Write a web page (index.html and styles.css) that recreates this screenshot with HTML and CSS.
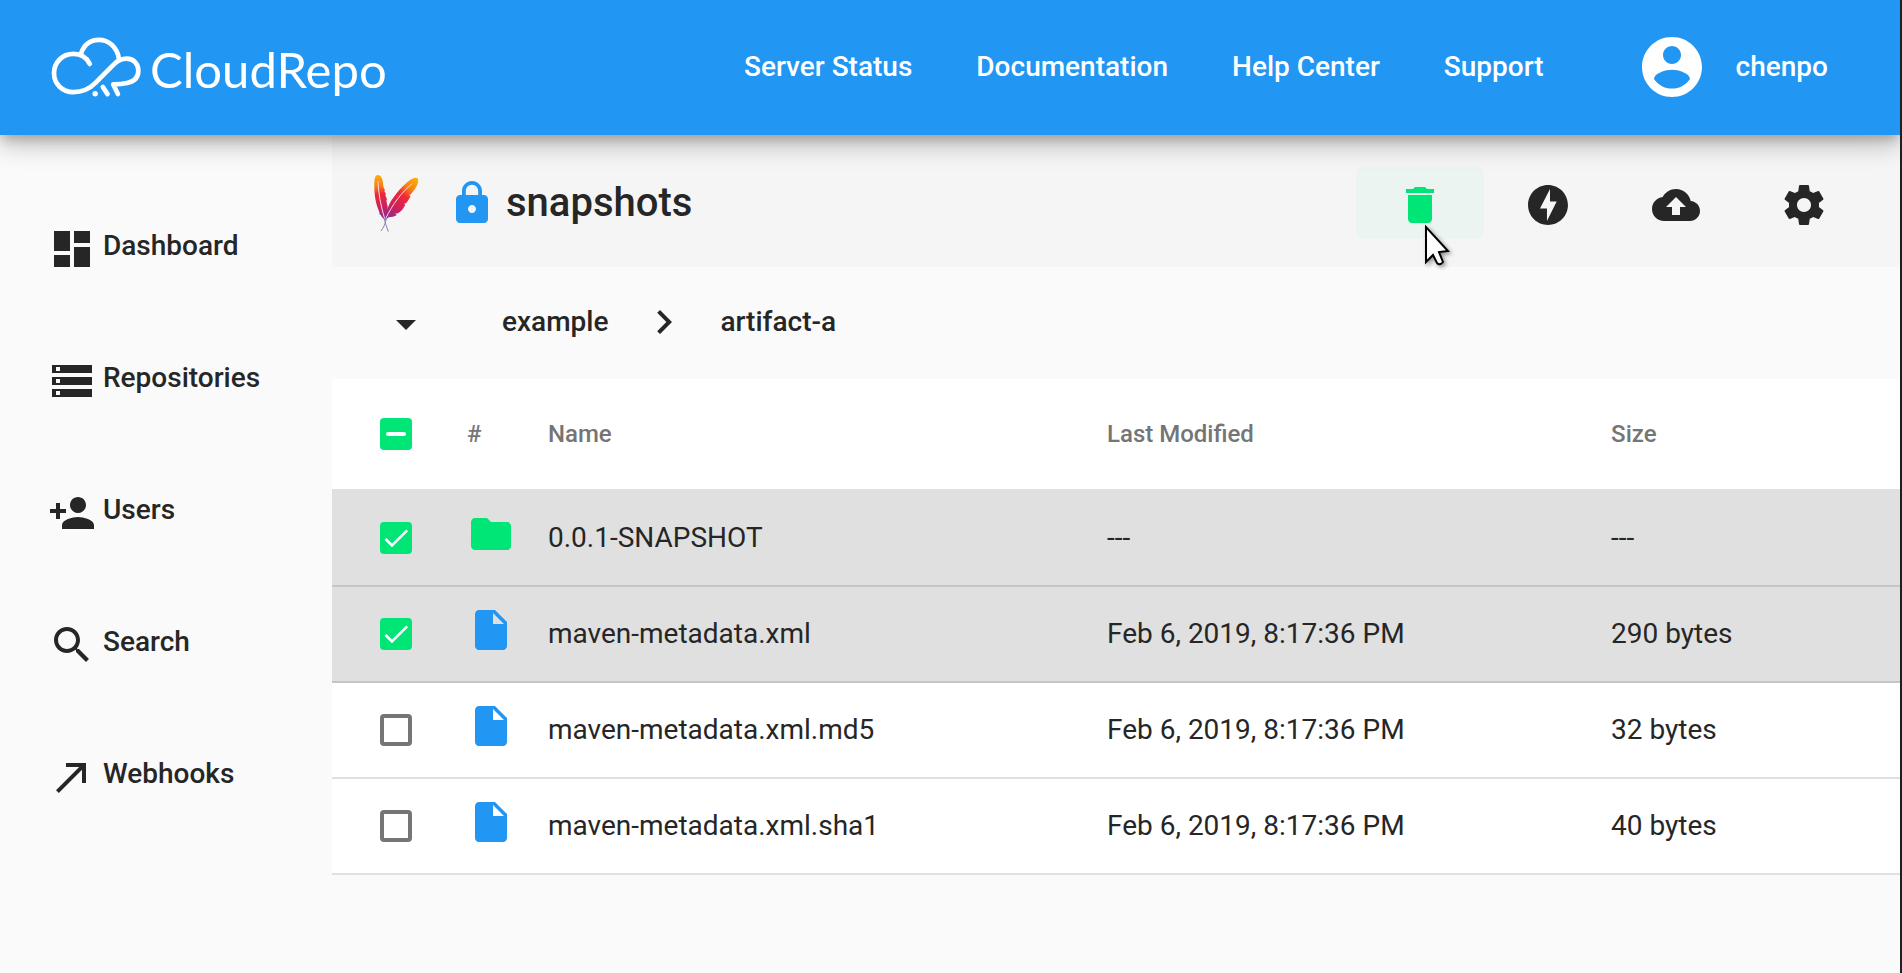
FILE: index.html
```html
<!DOCTYPE html>
<html lang="en">
<head>
<meta charset="utf-8">
<meta name="viewport" content="width=device-width, initial-scale=1">
<title>CloudRepo</title>
<link rel="stylesheet" href="styles.css">
</head>
<body>
<header class="topbar">
  <a class="brand" href="#">
    <svg class="brand-mark" viewBox="64 48 272 184" fill="none" stroke="currentColor" stroke-width="14" stroke-linecap="round" stroke-linejoin="round" aria-hidden="true">
      <path d="M180 131C171 112 153 101 131 101C98 101 73 126 73 159C73 191 98 215 131 215C157 215 177 207 196 188L252 132C264 120 275 115 290 115C311 115 325 130 325 151C325 172 311 184 291 188C279 191 265 192 250 192L264 221"/>
      <path d="M153 101C162 75 181 59 207 59C237 59 262 81 267 115"/>
      <path d="M219 200L233 221"/>
      <circle cx="196" cy="220" r="8" fill="currentColor" stroke="none"/>
    </svg>
    <span class="brand-name">CloudRepo</span>
  </a>
  <nav class="topnav">
    <a href="#">Server Status</a>
    <a href="#">Documentation</a>
    <a href="#">Help Center</a>
    <a href="#">Support</a>
  </nav>
  <button class="account" type="button">
    <svg class="avatar" viewBox="0 0 24 24" aria-hidden="true"><path d="M12 2C6.48 2 2 6.48 2 12s4.48 10 10 10 10-4.480 10-10S17.520 2 12 2zm0 3c1.660 0 3 1.340 3 3s-1.340 3-3 3-3-1.340-3-3 1.340-3 3-3zm0 14.200c-2.500 0-4.710-1.280-6-3.220.030-1.990 4-3.080 6-3.080 1.990 0 5.970 1.090 6 3.080-1.290 1.940-3.500 3.220-6 3.220z"/></svg>
    <span>chenpo</span>
  </button>
</header>

<div class="layout">
  <nav class="sidebar">
    <a href="#"><svg class="icon" viewBox="0 0 24 24" aria-hidden="true"><path d="M3 13h8V3H3v10zm0 8h8v-6H3v6zm10 0h8V11h-8v10zm0-18v6h8V3h-8z"/></svg><span>Dashboard</span></a>
    <a href="#"><svg class="icon" viewBox="0 0 24 24" aria-hidden="true"><path d="M2 20h20v-4H2v4zm2-3h2v2H4v-2zM2 4v4h20V4H2zm4 3H4V5h2v2zm-4 7h20v-4H2v4zm2-3h2v2H4v-2z"/></svg><span>Repositories</span></a>
    <a href="#"><svg class="icon" viewBox="0 0 24 24" aria-hidden="true"><path d="M15 12c2.210 0 4-1.790 4-4s-1.790-4-4-4-4 1.790-4 4 1.790 4 4 4zm-9-2V7H4v3H1v2h3v3h2v-3h3v-2H6zm9 4c-2.670 0-8 1.340-8 4v2h16v-2c0-2.660-5.330-4-8-4z"/></svg><span>Users</span></a>
    <a href="#"><svg class="icon" viewBox="0 0 24 24" aria-hidden="true"><path d="M15.500 14h-.790l-.280-.270C15.410 12.590 16 11.110 16 9.500 16 5.910 13.090 3 9.500 3S3 5.910 3 9.500 5.910 16 9.500 16c1.610 0 3.090-.590 4.230-1.570l.270.280v.790l5 4.990L20.490 19l-4.990-5zm-6 0C7.010 14 5 11.990 5 9.500S7.010 5 9.500 5 14 7.010 14 9.500 11.990 14 9.500 14z"/></svg><span>Search</span></a>
    <a href="#"><svg class="icon" viewBox="0 0 24 24" aria-hidden="true"><path d="M9 5v2h6.590L4 18.590 5.410 20 17 8.410V15h2V5z"/></svg><span>Webhooks</span></a>
  </nav>

  <main class="content">
    <div class="repo-bar">
      <svg class="maven" viewBox="24 24 138 177" aria-hidden="true">
        <defs>
          <linearGradient id="leftFeather" gradientUnits="userSpaceOnUse" x1="38" y1="27" x2="60" y2="160">
            <stop offset="0" stop-color="#fbb00f"/><stop offset=".25" stop-color="#f97d12"/><stop offset=".42" stop-color="#ee2a38"/><stop offset=".7" stop-color="#d01f5a"/><stop offset="1" stop-color="#7e2f9a"/>
          </linearGradient>
          <linearGradient id="rightFeather" gradientUnits="userSpaceOnUse" x1="156" y1="38" x2="64" y2="160">
            <stop offset="0" stop-color="#fbb00f"/><stop offset=".25" stop-color="#f97d12"/><stop offset=".42" stop-color="#ee2a38"/><stop offset=".7" stop-color="#d01f5a"/><stop offset="1" stop-color="#7e2f9a"/>
          </linearGradient>
        </defs>
        <path fill="url(#leftFeather)" d="M36 27C44 25 51 32 53 44C55 55 54 66 60 72L58 76L63 84L61 88L66 100L64 104L68 122C69 136 66 148 61 162C54 156 49 152 47 146L44 146L43 138C34 118 28 92 28 64C28 44 28 31 36 27Z"/>
        <path fill="url(#rightFeather)" d="M158 37C162 44 158 56 152 65C147 73 142 79 138 84L132 88L137 89C134 97 129 104 124 111L117 114L121 117C115 128 108 137 99 142L90 143L96 147C88 153 79 152 71 154L61 162C59 150 63 139 68 127C73 113 79 103 86 94C96 78 110 64 124 51C137 39 150 31 158 37Z"/>
        <path fill="none" stroke="#fbd9dc" stroke-width="3" d="M39 45C40 80 47 120 59 158M142 53C112 76 82 115 62 158"/>
        <path fill="none" stroke="#8f7fb5" stroke-width="3" d="M57 156C60 170 65 183 70 197M64 156C62 172 56 184 48 195"/>
      </svg>
      <svg class="icon lock" viewBox="0 0 24 24" aria-hidden="true"><path d="M18 8h-1V6c0-2.760-2.240-5-5-5S7 3.240 7 6v2H6c-1.100 0-2 .900-2 2v10c0 1.100.900 2 2 2h12c1.100 0 2-.900 2-2V10c0-1.100-.900-2-2-2zm-6 9c-1.100 0-2-.900-2-2s.900-2 2-2 2 .900 2 2-.900 2-2 2zm3.100-9H8.900V6c0-1.710 1.390-3.100 3.100-3.100 1.710 0 3.100 1.390 3.100 3.100v2z"/></svg>
      <h1>snapshots</h1>
      <div class="actions">
        <button class="action active" type="button" aria-label="Delete">
          <svg class="icon" viewBox="0 0 24 24" aria-hidden="true"><path d="M6 19c0 1.100.900 2 2 2h8c1.100 0 2-.900 2-2V7H6v12zM19 4h-3.500l-1-1h-5l-1 1H5v2h14V4z"/></svg>
          <svg class="pointer" viewBox="0 0 26 42" aria-hidden="true"><path d="M2 3V38L9 31L13 39Q16 42 19 38L15 28L24 27Z" fill="#fff" stroke="#000" stroke-width="2"/></svg>
        </button>
        <button class="action" type="button" aria-label="Quick actions">
          <svg class="icon" viewBox="0 0 24 24" aria-hidden="true"><path d="M12 2.020c-5.510 0-9.980 4.470-9.980 9.980s4.470 9.980 9.980 9.980 9.980-4.470 9.980-9.980S17.510 2.020 12 2.020zM11.480 20v-6.260H8L13 4v6.260h3.350L11.480 20z"/></svg>
        </button>
        <button class="action" type="button" aria-label="Upload">
          <svg class="icon" viewBox="0 0 24 24" aria-hidden="true"><path d="M19.350 10.040C18.670 6.590 15.640 4 12 4 9.110 4 6.600 5.640 5.350 8.040 2.340 8.360 0 10.910 0 14c0 3.310 2.690 6 6 6h13c2.760 0 5-2.240 5-5 0-2.640-2.050-4.780-4.650-4.960zM14 13v4h-4v-4H7l5-5 5 5h-3z"/></svg>
        </button>
        <button class="action" type="button" aria-label="Settings">
          <svg class="icon" viewBox="0 0 24 24" aria-hidden="true"><path d="M19.430 12.980c.040-.320.070-.640.070-.980s-.030-.660-.070-.980l2.110-1.650c.190-.150.240-.420.120-.640l-2-3.460c-.120-.220-.390-.300-.610-.220l-2.490 1c-.520-.400-1.080-.730-1.690-.980l-.380-2.650C14.460 2.180 14.250 2 14 2h-4c-.250 0-.460.180-.490.420l-.380 2.650c-.610.250-1.170.590-1.690.980l-2.490-1c-.230-.090-.490 0-.610.220l-2 3.460c-.130.220-.070.490.120.640l2.110 1.650c-.040.320-.070.650-.070.980s.030.660.070.980l-2.110 1.650c-.190.150-.240.420-.120.640l2 3.460c.120.220.390.300.610.220l2.490-1c.520.400 1.080.730 1.690.980l.380 2.650c.030.240.240.420.490.420h4c.250 0 .460-.180.490-.420l.380-2.650c.610-.250 1.170-.590 1.690-.980l2.490 1c.230.090.490 0 .610-.220l2-3.460c.120-.220.070-.490-.120-.640l-2.110-1.650zM12 15.500c-1.930 0-3.500-1.570-3.500-3.500s1.570-3.500 3.500-3.500 3.500 1.570 3.500 3.500-1.570 3.500-3.500 3.500z"/></svg>
        </button>
      </div>
    </div>

    <nav class="crumbs" aria-label="Path">
      <button class="crumb-menu" type="button" aria-label="Show path menu"><svg class="icon" viewBox="0 0 24 24" aria-hidden="true"><path d="M7 10l5 5 5-5z"/></svg></button>
      <a href="#">example</a>
      <svg class="icon" viewBox="0 0 24 24" aria-hidden="true"><path d="M10 6L8.590 7.410 13.170 12l-4.580 4.590L10 18l6-6z"/></svg>
      <a href="#">artifact-a</a>
    </nav>

    <table class="files">
      <colgroup><col class="col-check"><col class="col-type"><col class="col-name"><col class="col-date"><col></colgroup>
      <thead>
        <tr>
          <th scope="col"><input class="check mixed" type="checkbox" aria-checked="mixed" aria-label="Select all"></th>
          <th scope="col">#</th>
          <th scope="col">Name</th>
          <th scope="col">Last Modified</th>
          <th scope="col">Size</th>
        </tr>
      </thead>
      <tbody>
        <tr class="selected">
          <td><input class="check" type="checkbox" checked aria-labelledby="file1"></td>
          <td><svg class="icon folder" viewBox="0 0 24 24" aria-hidden="true"><path d="M10 4H4c-1.100 0-1.990.900-1.990 2L2 18c0 1.100.900 2 2 2h16c1.100 0 2-.900 2-2V8c0-1.100-.900-2-2-2h-8l-2-2z"/></svg></td>
          <td id="file1">0.0.1-SNAPSHOT</td>
          <td>---</td>
          <td>---</td>
        </tr>
        <tr class="selected">
          <td><input class="check" type="checkbox" checked aria-labelledby="file2"></td>
          <td><svg class="icon file" viewBox="0 0 24 24" aria-hidden="true"><path d="M6 2c-1.100 0-1.990.900-1.990 2L4 20c0 1.100.890 2 1.990 2H18c1.100 0 2-.900 2-2V8l-6-6H6zm7 7V3.500L18.500 9H13z"/></svg></td>
          <td id="file2">maven-metadata.xml</td>
          <td>Feb 6, 2019, 8:17:36 PM</td>
          <td>290 bytes</td>
        </tr>
        <tr>
          <td><input class="check" type="checkbox" aria-labelledby="file3"></td>
          <td><svg class="icon file" viewBox="0 0 24 24" aria-hidden="true"><path d="M6 2c-1.100 0-1.990.900-1.990 2L4 20c0 1.100.890 2 1.990 2H18c1.100 0 2-.900 2-2V8l-6-6H6zm7 7V3.500L18.500 9H13z"/></svg></td>
          <td id="file3">maven-metadata.xml.md5</td>
          <td>Feb 6, 2019, 8:17:36 PM</td>
          <td>32 bytes</td>
        </tr>
        <tr>
          <td><input class="check" type="checkbox" aria-labelledby="file4"></td>
          <td><svg class="icon file" viewBox="0 0 24 24" aria-hidden="true"><path d="M6 2c-1.100 0-1.990.900-1.990 2L4 20c0 1.100.890 2 1.990 2H18c1.100 0 2-.900 2-2V8l-6-6H6zm7 7V3.500L18.500 9H13z"/></svg></td>
          <td id="file4">maven-metadata.xml.sha1</td>
          <td>Feb 6, 2019, 8:17:36 PM</td>
          <td>40 bytes</td>
        </tr>
      </tbody>
    </table>
  </main>
</div>
</body>
</html>
```
FILE: styles.css
```css
* {
  box-sizing: border-box;
}

body {
  margin: 0;
  min-height: 100vh;
  border-right: 2px solid #1d1f23;
  background: #fafafa;
  color: #262626;
  font: 400 28px/40px Roboto, sans-serif;
  overflow-x: hidden;
}

a {
  color: inherit;
  text-decoration: none;
}

button {
  padding: 0;
  border: 0;
  background: none;
  color: inherit;
  font: inherit;
  cursor: pointer;
}

svg {
  display: block;
  flex: none;
}

.icon {
  width: 48px;
  height: 48px;
  fill: currentColor;
}

/* Top bar */

.topbar {
  position: relative;
  z-index: 1;
  display: flex;
  align-items: center;
  min-height: 135px;
  padding: 0 72px 2px 51px;
  background: #2196f3;
  color: #fff;
  font-weight: 500;
  box-shadow: 0 6px 10px -2px rgba(0, 0, 0, .2),
    0 12px 20px 0 rgba(0, 0, 0, .14),
    0 2px 36px 0 rgba(0, 0, 0, .12);
}

.brand {
  display: flex;
  align-items: center;
  gap: 8px;
}

.brand-mark {
  width: 91px;
  height: 62px;
}

.brand-name {
  padding-top: 4px;
  font: 400 49px/60px Lato, sans-serif;
}

.topnav {
  display: flex;
  gap: 64px;
  margin-left: auto;
}

.account {
  display: flex;
  align-items: center;
  gap: 28px;
  margin-left: 92px;
}

.avatar {
  width: 72px;
  height: 72px;
  fill: currentColor;
}

/* Page columns */

.layout {
  display: grid;
  grid-template-columns: 332px minmax(0, 1fr);
}

.sidebar {
  display: flex;
  flex-direction: column;
  gap: 80px;
  padding: 86px 0 0 48px;
  font-weight: 500;
}

.sidebar a {
  display: flex;
  gap: 7px;
  height: 52px;
}

.sidebar .icon {
  margin-top: 4px;
}

.sidebar span {
  padding-top: 5px;
}

/* Repository heading */

.repo-bar {
  display: flex;
  align-items: center;
  min-height: 132px;
  padding: 4px 32px 0 41px;
  background: #f5f5f5;
}

.maven {
  width: 46px;
  height: 59px;
}

.lock {
  margin-left: 29px;
  color: #2196f3;
}

h1 {
  margin: 0 0 0 10px;
  font-size: 40px;
  font-weight: 500;
  line-height: 48px;
}

.actions {
  display: flex;
  margin-left: auto;
}

.action {
  position: relative;
  display: flex;
  justify-content: center;
  width: 128px;
  height: 72px;
  padding-top: 14px;
  border-radius: 8px;
}

.action.active {
  background: #ebf4f1;
  color: #00e676;
}

.pointer {
  position: absolute;
  top: 57px;
  left: 68px;
  width: 26px;
  height: 42px;
  filter: drop-shadow(2px 2px 2px rgba(0, 0, 0, .4));
}

/* Path */

.crumbs {
  display: flex;
  align-items: center;
  min-height: 112px;
  padding: 0 0 2px 50px;
  font-weight: 500;
}

.crumb-menu {
  padding-top: 4px;
  margin-right: 72px;
}

.crumbs > .icon {
  margin: 0 32px;
}

/* File list */

.files {
  width: 100%;
  border-collapse: separate;
  border-spacing: 0;
  table-layout: fixed;
  background: #fff;
}

.col-check {
  width: 135px;
}

.col-type {
  width: 81px;
}

.col-name {
  width: 35.65%;
}

.col-date {
  width: 32.15%;
}

.files th,
.files td {
  height: 96px;
  padding: 0 0 1px;
  border-bottom: 2px solid #e0e0e0;
  text-align: left;
  vertical-align: middle;
}

.files th {
  height: 112px;
  color: #757575;
  font-size: 24px;
  font-weight: 500;
}

.files th:first-child,
.files td:first-child {
  padding: 0 0 0 48px;
}

.files .selected td {
  background: #e0e0e0;
  border-bottom-color: #c5c5c5;
}

.files td .icon {
  margin-bottom: 8px;
}

.folder {
  color: #00e676;
}

.file {
  color: #2196f3;
}

.check {
  appearance: none;
  display: block;
  width: 32px;
  height: 32px;
  margin: 0;
  border: 4px solid #757575;
  border-radius: 4px;
}

.check:checked,
.check.mixed {
  border: 0;
  background: #00e676 center / 32px no-repeat;
}

.check:checked {
  background-image: url("data:image/svg+xml,%3Csvg xmlns='http://www.w3.org/2000/svg' viewBox='0 0 24 24'%3E%3Cpath fill='none' stroke='%23fff' stroke-width='2' d='M4.100 12.700L9 17.600 20.300 6.300'/%3E%3C/svg%3E");
}

.check.mixed {
  background-image: url("data:image/svg+xml,%3Csvg xmlns='http://www.w3.org/2000/svg' viewBox='0 0 32 32'%3E%3Crect x='6' y='14' width='20' height='4' rx='2' fill='%23fff'/%3E%3C/svg%3E");
}
```
